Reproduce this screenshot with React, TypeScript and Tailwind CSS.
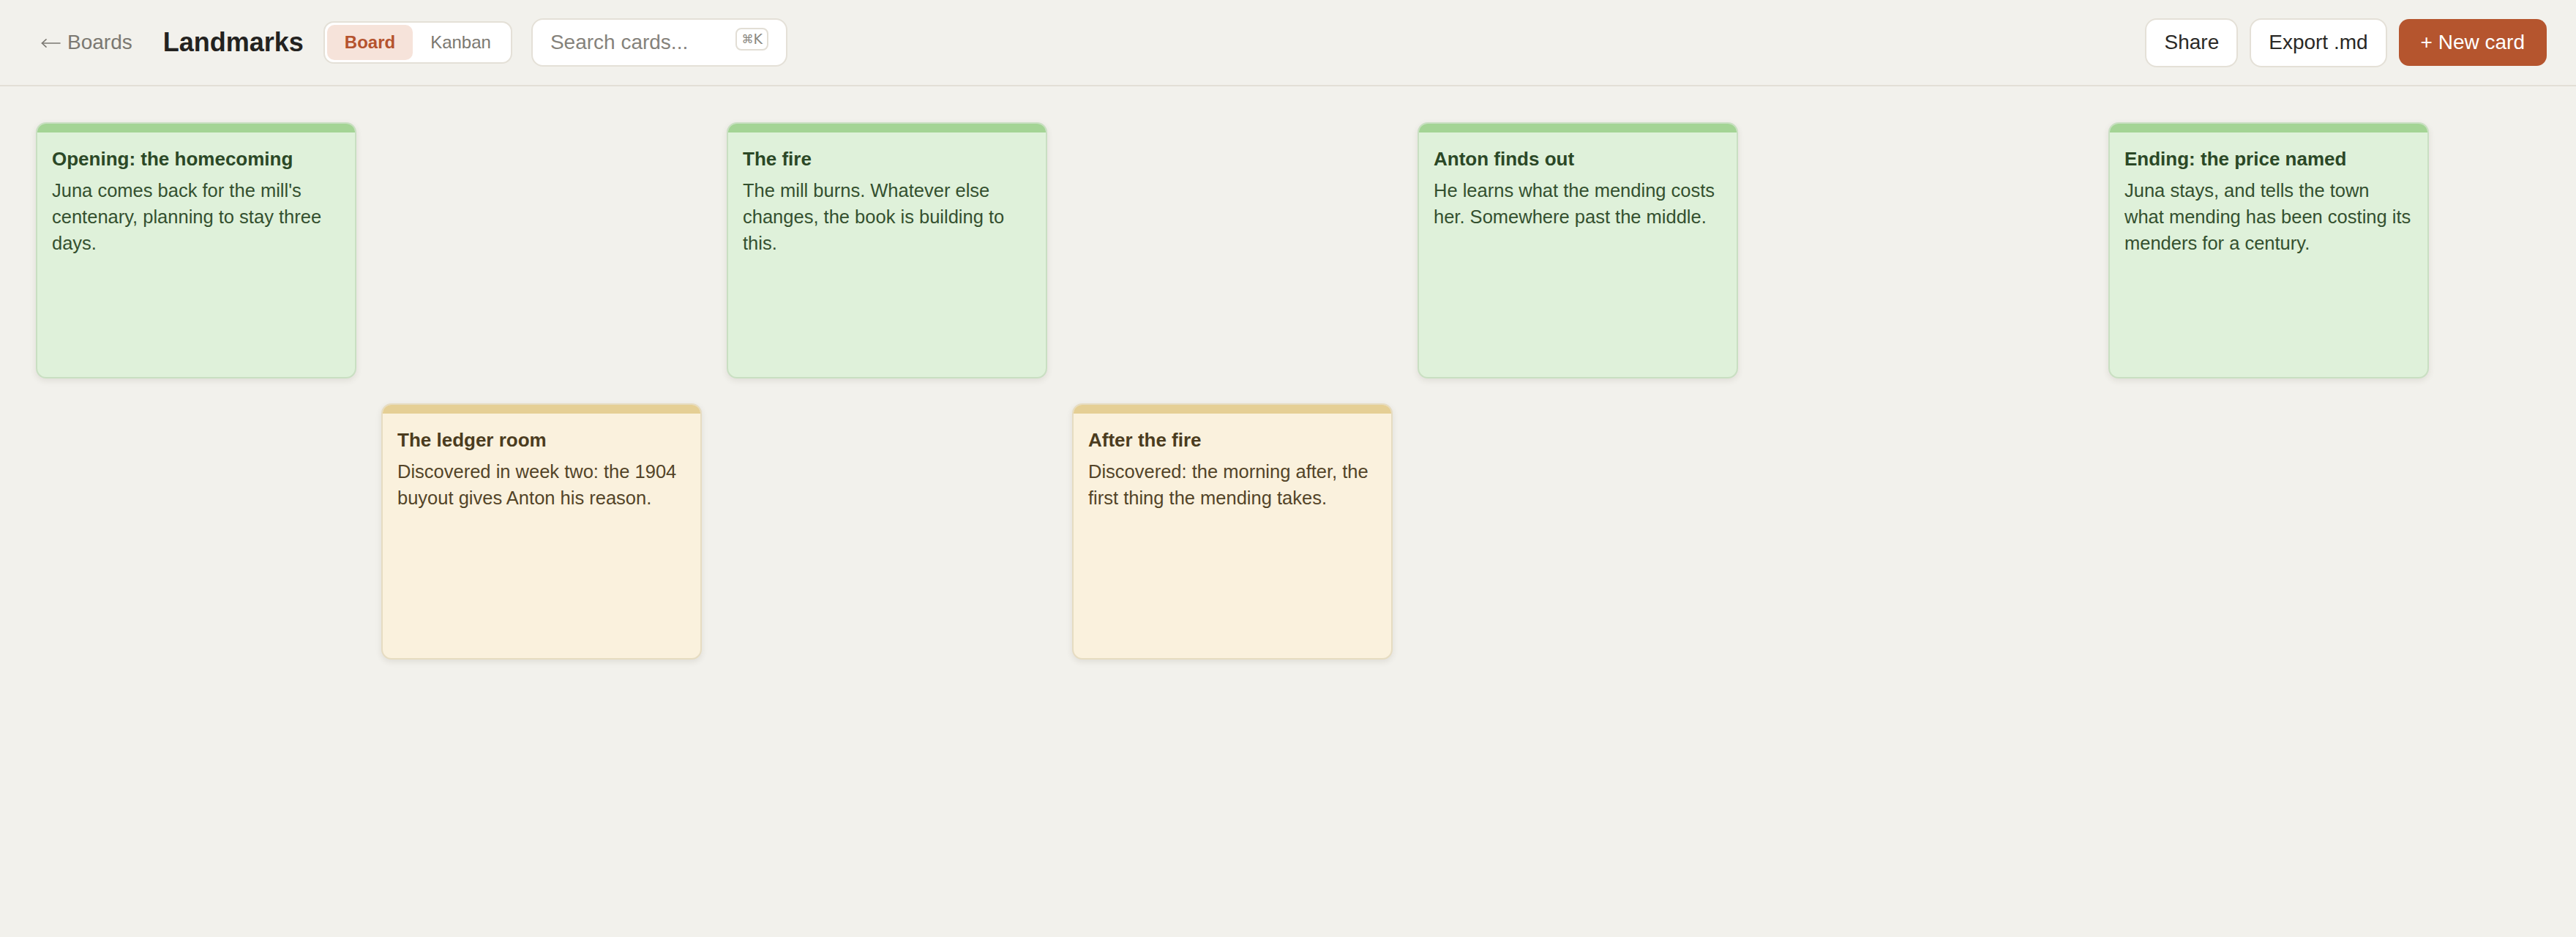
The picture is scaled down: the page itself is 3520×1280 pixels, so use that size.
import { Fragment } from 'react'

type Tone = 'green' | 'yellow'

interface Landmark {
  title: string
  body: string
  tone: Tone
  place: string
}

const landmarks: Landmark[] = [
  {
    title: 'Opening: the homecoming',
    body: "Juna comes back for the mill's centenary, planning to stay three days.",
    tone: 'green',
    place: 'col-start-1 row-start-1',
  },
  {
    title: 'The ledger room',
    body: 'Discovered in week two: the 1904 buyout gives Anton his reason.',
    tone: 'yellow',
    place: 'col-start-2 row-start-2',
  },
  {
    title: 'The fire',
    body: 'The mill burns. Whatever else changes, the book is building to this.',
    tone: 'green',
    place: 'col-start-3 row-start-1',
  },
  {
    title: 'After the fire',
    body: 'Discovered: the morning after, the first thing the mending takes.',
    tone: 'yellow',
    place: 'col-start-4 row-start-2',
  },
  {
    title: 'Anton finds out',
    body: 'He learns what the mending costs her. Somewhere past the middle.',
    tone: 'green',
    place: 'col-start-5 row-start-1',
  },
  {
    title: 'Ending: the price named',
    body: 'Juna stays, and tells the town what mending has been costing its menders for a century.',
    tone: 'green',
    place: 'col-start-7 row-start-1',
  },
]

const toneStyles = {
  green: {
    card: 'bg-[#dff1da] border-[#c9dfc2]',
    stripe: 'bg-[#a4d495]',
    title: 'text-[#2b4826]',
    body: 'text-[#34502f]',
  },
  yellow: {
    card: 'bg-[#faf1dd] border-[#e6dcc1]',
    stripe: 'bg-[#e5cf95]',
    title: 'text-[#4b3c1e]',
    body: 'text-[#534428]',
  },
} as const

function LandmarkCard({ card }: { card: Landmark }) {
  const s = toneStyles[card.tone]
  return (
    <div
      className={`${card.place} ${s.card} flex flex-col overflow-hidden rounded-[14px] border-2 shadow-[0_3px_8px_rgba(60,50,30,0.10)]`}
    >
      <div className={`${s.stripe} h-[12px] shrink-0`} />
      <div className="px-[20px] pt-[21px]">
        <div className={`${s.title} text-[26px] font-bold leading-[30px]`}>{card.title}</div>
        <p className={`${s.body} mt-[10px] text-[25.5px] leading-[36px]`}>{card.body}</p>
      </div>
    </div>
  )
}

function ArrowLeft() {
  return (
    <svg width="27" height="14" viewBox="0 0 27 14" fill="none" stroke="#7b7871" strokeWidth="1.6" strokeLinecap="round">
      <path d="M1.5 7H26" />
      <path d="M7 1.8L1.5 7L7 12.2" />
    </svg>
  )
}

export default function App() {
  return (
    <div
      className="min-h-[1280px] w-full bg-[#f2f1ec]"
      style={{ fontFamily: '"Liberation Sans", Arial, sans-serif' }}
    >
      <header className="flex h-[118px] items-center justify-between border-b-2 border-[#e3dfd6] pl-10 pr-10">
        <div className="flex items-center">
          <button className="flex items-center px-4 text-[28px] text-[#7b7871]">
            <span className="mt-[2px]">
              <ArrowLeft />
            </span>
            <span className="ml-[9px]">Boards</span>
          </button>
          <h1 className="ml-[26px] text-[36px] font-bold text-[#232220]">Landmarks</h1>
          <div className="ml-[27px] flex h-[58px] items-center rounded-[14px] border-2 border-[#e4e0d7] bg-white p-[3px]">
            <span className="flex h-[48px] items-center rounded-[10px] bg-[#f6e3da] px-6 text-[24px] font-bold text-[#b5532e]">
              Board
            </span>
            <span className="flex h-[48px] items-center rounded-[10px] px-6 text-[24px] text-[#7b7871]">
              Kanban
            </span>
          </div>
          <div className="ml-[26px] flex h-[66px] w-[350px] items-center justify-between rounded-[16px] border-2 border-[#e4e0d7] bg-white pl-6 pr-[24px]">
            <span className="text-[28px] text-[#85827b]">Search cards...</span>
            <kbd
              className="mb-[9px] flex h-[31px] items-center rounded-[8px] border-2 border-[#e2ded5] px-[6px] text-[19px] text-[#8a877f]"
              style={{ fontFamily: '"DejaVu Sans", sans-serif' }}
            >
              <span className="text-[16px]">⌘</span>K
            </kbd>
          </div>
        </div>
        <div className="flex items-center gap-[16px]">
          <button className="h-[67px] rounded-[16px] border-2 border-[#e4e0d7] bg-white px-6 text-[28px] text-[#2a2926]">
            Share
          </button>
          <button className="h-[67px] rounded-[16px] border-2 border-[#e4e0d7] bg-white px-6 text-[28px] text-[#2a2926]">
            Export .md
          </button>
          <button className="h-[64px] rounded-[14px] bg-[#b5552e] px-[30px] text-[28px] text-white">
            + New card
          </button>
        </div>
      </header>

      <main className="pl-[49px] pt-[49px]">
        <div className="grid grid-cols-[repeat(7,438px)] grid-rows-[350px_350px] gap-[34px]">
          {landmarks.map((card) => (
            <Fragment key={card.title}>
              <LandmarkCard card={card} />
            </Fragment>
          ))}
        </div>
      </main>
    </div>
  )
}
